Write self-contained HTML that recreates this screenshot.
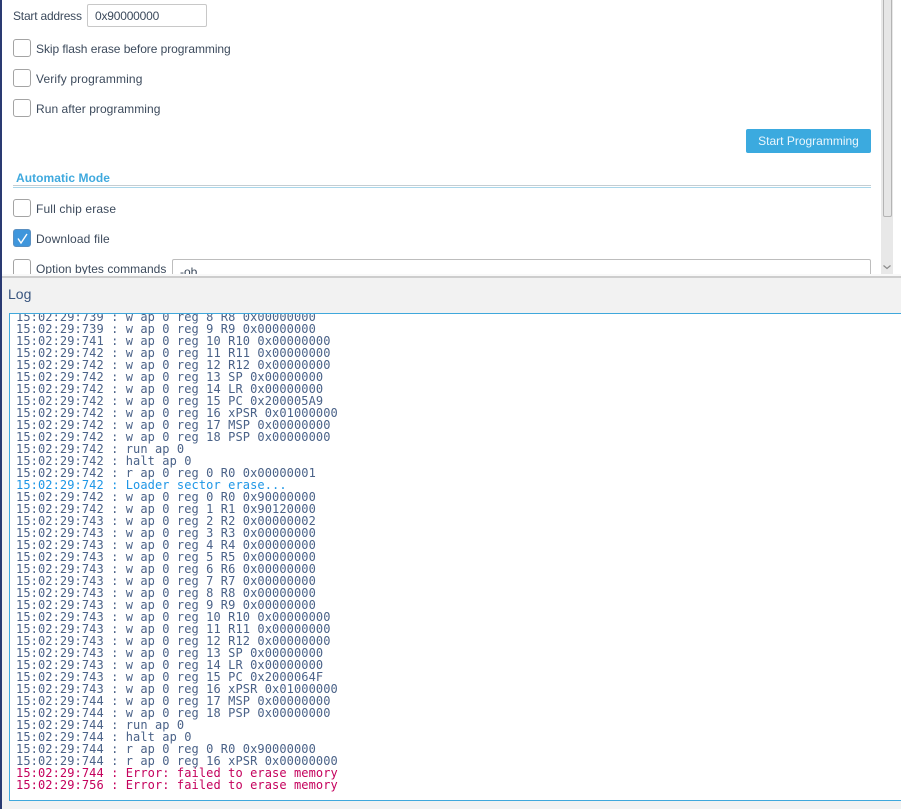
<!DOCTYPE html>
<html><head><meta charset="utf-8"><style>
html,body{margin:0;padding:0;width:901px;height:809px;overflow:hidden;background:#fff}
body{position:relative;font-family:"Liberation Sans",sans-serif;font-size:12px;color:#3c4a5c}
.a{position:absolute}
.t{position:absolute;white-space:nowrap;line-height:16px;height:16px}
.c{position:absolute;left:13px;width:16px;height:16px;border:1px solid #a4a4a4;border-radius:3px;background:#fff}
#log{position:absolute;left:9px;top:313px;width:892px;height:486px;border:1px solid #3fa8dc;border-right:none;background:#fff;overflow:hidden}
#log pre{margin:0;position:absolute;left:6px;top:-3px;font-family:"DejaVu Sans Mono",monospace;font-size:12px;letter-spacing:.09px;line-height:12px;color:#4a6288}
.b{color:#1e96e6}.r{color:#c4005c}
</style></head><body>
<div class="a" style="left:0;top:0;width:2px;height:809px;background:#2a3a72"></div>
<div class="t" style="left:13px;top:8px;letter-spacing:-.2px">Start address</div>
<div class="a" style="left:87px;top:4px;width:118px;height:21px;border:1px solid #c8c8c8;border-radius:2px"></div>
<div class="t" style="left:95px;top:8px;letter-spacing:-.2px">0x90000000</div>
<div class="c" style="top:39px"></div><div class="t" style="left:36px;top:41px;letter-spacing:-.06px">Skip flash erase before programming</div>
<div class="c" style="top:69px"></div><div class="t" style="left:36px;top:71px;letter-spacing:.14px">Verify programming</div>
<div class="c" style="top:99px"></div><div class="t" style="left:36px;top:101px;letter-spacing:.05px">Run after programming</div>
<div class="a" style="left:746px;top:129px;width:125px;height:24px;background:#3baadf;border-radius:2px;color:#eaf6fd;text-align:center;line-height:24px">Start Programming</div>
<div class="t" style="left:16px;top:170px;font-weight:bold;color:#3fa9de;letter-spacing:.05px">Automatic Mode</div>
<div class="a" style="left:13px;top:185px;width:858px;height:1px;background:#c4cdd2"></div>
<div class="a" style="left:13px;top:187px;width:858px;height:1px;background:#a9d6ea"></div>
<div class="c" style="top:199px"></div><div class="t" style="left:36px;top:201px;letter-spacing:.14px">Full chip erase</div>
<div class="c" style="top:229px;background:#3f96dc;border-color:#5a8fc0"></div>
<svg class="a" style="left:13px;top:229px" width="18" height="18"><path d="M5 9.5L8 14L14 5" fill="none" stroke="#fff" stroke-width="1.4"/></svg>
<div class="t" style="left:36px;top:231px;letter-spacing:.14px">Download file</div>
<div class="c" style="top:259px"></div><div class="t" style="left:36px;top:261px;letter-spacing:.05px">Option bytes commands</div>
<div class="a" style="left:172px;top:259px;width:697px;height:30px;border:1px solid #bdbdbd;border-radius:2px"></div>
<div class="t" style="left:180px;top:264px">-ob</div>
<div class="a" style="left:881px;top:0;width:12px;height:276px;background:#e8e8e8"></div>
<div class="a" style="left:883px;top:0;width:7px;height:216px;background:#e6e6e6;border:1px solid #b4b4b4;border-top:none;border-radius:0 0 2px 2px"></div>
<svg class="a" style="left:881px;top:263px" width="12" height="10"><path d="M2.5 2.5L6 5.5L9.5 2.5" fill="none" stroke="#8a8a8a" stroke-width="1.2"/></svg>
<div class="a" style="left:2px;top:274px;width:899px;height:535px;background:#f2f2f2"></div>
<div class="a" style="left:2px;top:274px;width:899px;height:2px;background:#f9f9f9"></div>
<div class="a" style="left:2px;top:276px;width:899px;height:2px;background:#cdcdcd"></div>
<div class="t" style="left:8px;top:286px;font-size:14px;color:#39557f">Log</div>
<div id="log"><pre>15:02:29:739 : w ap 0 reg 8 R8 0x00000000
15:02:29:739 : w ap 0 reg 9 R9 0x00000000
15:02:29:741 : w ap 0 reg 10 R10 0x00000000
15:02:29:742 : w ap 0 reg 11 R11 0x00000000
15:02:29:742 : w ap 0 reg 12 R12 0x00000000
15:02:29:742 : w ap 0 reg 13 SP 0x00000000
15:02:29:742 : w ap 0 reg 14 LR 0x00000000
15:02:29:742 : w ap 0 reg 15 PC 0x200005A9
15:02:29:742 : w ap 0 reg 16 xPSR 0x01000000
15:02:29:742 : w ap 0 reg 17 MSP 0x00000000
15:02:29:742 : w ap 0 reg 18 PSP 0x00000000
15:02:29:742 : run ap 0
15:02:29:742 : halt ap 0
15:02:29:742 : r ap 0 reg 0 R0 0x00000001
<span class="b">15:02:29:742 : Loader sector erase...</span>
15:02:29:742 : w ap 0 reg 0 R0 0x90000000
15:02:29:742 : w ap 0 reg 1 R1 0x90120000
15:02:29:743 : w ap 0 reg 2 R2 0x00000002
15:02:29:743 : w ap 0 reg 3 R3 0x00000000
15:02:29:743 : w ap 0 reg 4 R4 0x00000000
15:02:29:743 : w ap 0 reg 5 R5 0x00000000
15:02:29:743 : w ap 0 reg 6 R6 0x00000000
15:02:29:743 : w ap 0 reg 7 R7 0x00000000
15:02:29:743 : w ap 0 reg 8 R8 0x00000000
15:02:29:743 : w ap 0 reg 9 R9 0x00000000
15:02:29:743 : w ap 0 reg 10 R10 0x00000000
15:02:29:743 : w ap 0 reg 11 R11 0x00000000
15:02:29:743 : w ap 0 reg 12 R12 0x00000000
15:02:29:743 : w ap 0 reg 13 SP 0x00000000
15:02:29:743 : w ap 0 reg 14 LR 0x00000000
15:02:29:743 : w ap 0 reg 15 PC 0x2000064F
15:02:29:743 : w ap 0 reg 16 xPSR 0x01000000
15:02:29:744 : w ap 0 reg 17 MSP 0x00000000
15:02:29:744 : w ap 0 reg 18 PSP 0x00000000
15:02:29:744 : run ap 0
15:02:29:744 : halt ap 0
15:02:29:744 : r ap 0 reg 0 R0 0x90000000
15:02:29:744 : r ap 0 reg 16 xPSR 0x00000000
<span class="r">15:02:29:744 : Error: failed to erase memory
15:02:29:756 : Error: failed to erase memory</span></pre></div>
</body></html>
